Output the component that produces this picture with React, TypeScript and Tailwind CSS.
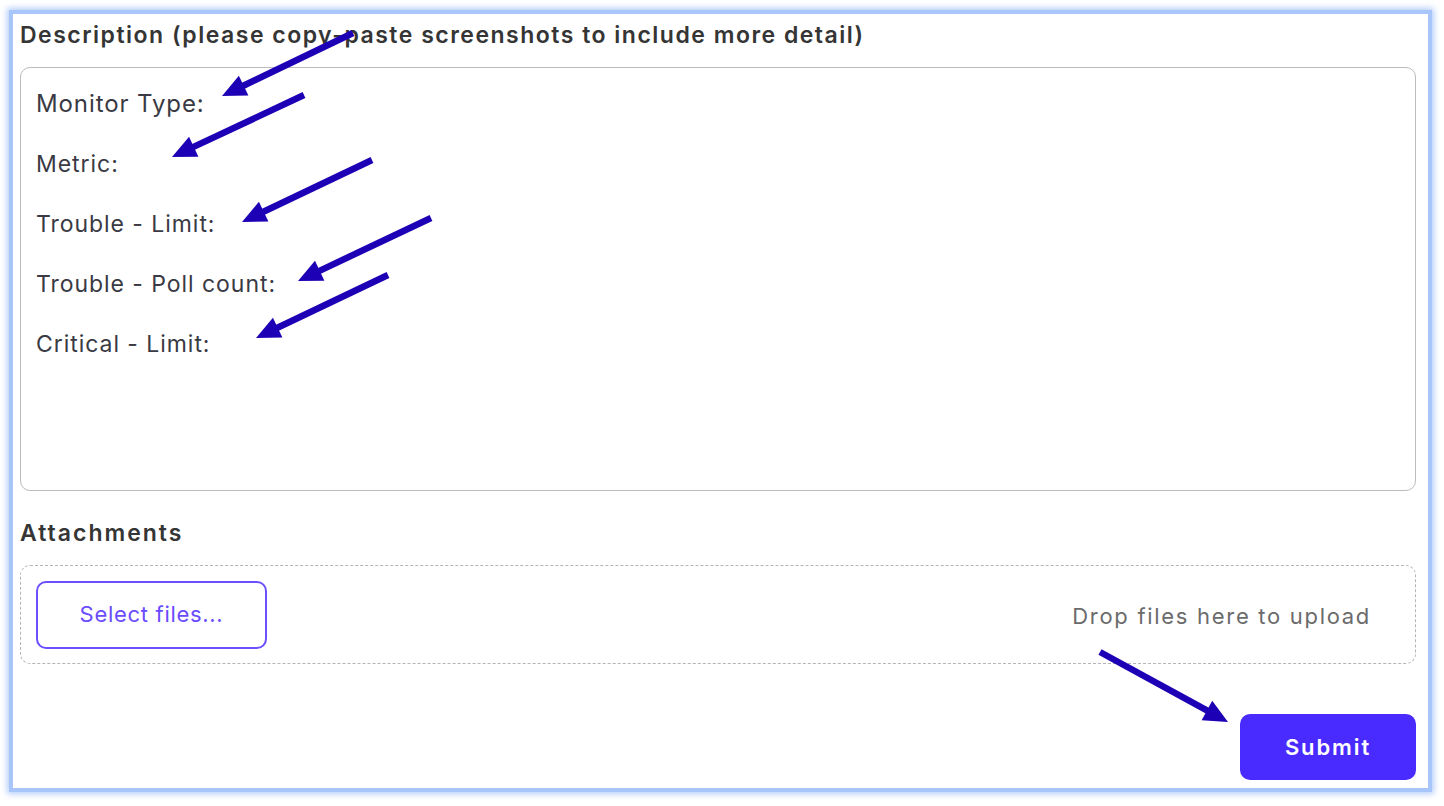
import React from 'react';

const lines = ['Metric:', 'Trouble - Limit:', 'Trouble - Poll count:', 'Critical - Limit:'];

// tail -> tip of each annotation arrow, in page coordinates
const arrows = [
  [353, 33, 222, 96],
  [304, 95, 172, 157],
  [372, 160, 242, 222],
  [431, 218, 298, 281],
  [388, 275, 256, 338],
  [1100, 652, 1228, 722],
];

function Arrow({ x1, y1, x2, y2 }: { x1: number; y1: number; x2: number; y2: number }) {
  const dx = x2 - x1;
  const dy = y2 - y1;
  const len = Math.hypot(dx, dy);
  const ux = dx / len;
  const uy = dy / len;
  const head = 24;
  const half = 11;
  const bx = x2 - ux * head;
  const by = y2 - uy * head;
  const pts = `${x2},${y2} ${bx - uy * half},${by + ux * half} ${bx + uy * half},${by - ux * half}`;
  return (
    <g>
      <line x1={x1} y1={y1} x2={bx + ux * 2} y2={by + uy * 2} stroke="#1d00b5" strokeWidth={6.5} />
      <polygon points={pts} fill="#1d00b5" />
    </g>
  );
}

export default function App() {
  return (
    <div className="relative w-[1444px] h-[806px] bg-white overflow-hidden font-['Inter',sans-serif]">
      <div className="ml-[9px] mt-[10px] w-[1423px] h-[782px] border-4 border-[#a9c6fb] bg-white shadow-[0_0_6px_2px_rgba(150,185,250,0.7)] flex flex-col pl-[7px] pr-[12px]">
        <h2 className="mt-[8px] text-[23px] leading-[26px] font-semibold text-[#353535] tracking-[1.5px]">
          Description (please copy-paste screenshots to include more detail)
        </h2>
        <div className="mt-[19px] h-[424px] border border-[#bcbcbf] rounded-[10px] px-[15px] pt-[20px] text-[#3a3a44]">
          <div className="text-[24px] leading-[32px] tracking-[0.9px]">Monitor Type:</div>
          {lines.map((l) => (
            <div key={l} className="mt-[28px] text-[23px] leading-[32px] tracking-[0.95px]">
              {l}
            </div>
          ))}
        </div>
        <h2 className="mt-[29px] text-[23px] leading-[26px] font-semibold text-[#353535] tracking-[2px]">
          Attachments
        </h2>
        <div className="mt-[19px] h-[99px] border border-dashed border-[#b4b4b8] rounded-[10px] flex items-center justify-between pl-[15px] pr-[44px]">
          <button className="w-[231px] h-[68px] border-2 border-[#6c4ffe] rounded-[10px] text-[22px] tracking-[0.7px] text-[#6a4cff]">
            Select files...
          </button>
          <span className="mt-[3px] text-[22px] tracking-[1.7px] text-[#6b6b6b]">Drop files here to upload</span>
        </div>
        <div className="mt-[50px] flex justify-end">
          <button className="w-[176px] h-[66px] rounded-[10px] bg-[#4a2bff] text-white text-[22px] font-semibold tracking-[1.9px]">
            Submit
          </button>
        </div>
      </div>
      <svg className="absolute inset-0 pointer-events-none" width={1444} height={806}>
        {arrows.map(([x1, y1, x2, y2], i) => (
          <Arrow key={i} x1={x1} y1={y1} x2={x2} y2={y2} />
        ))}
      </svg>
    </div>
  );
}
